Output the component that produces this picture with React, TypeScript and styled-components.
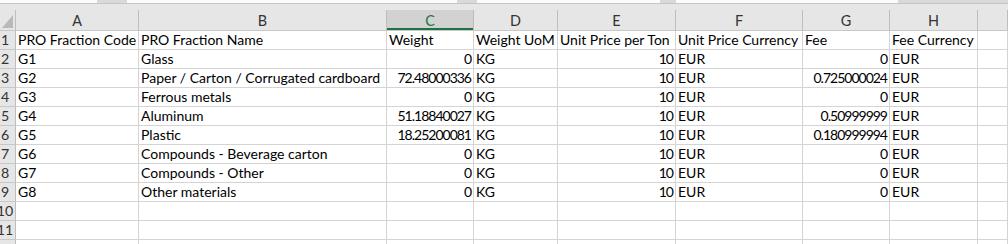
import React from "react";
import styled, { createGlobalStyle } from "styled-components";

const Global = createGlobalStyle`
  html, body { margin: 0; padding: 0; background: #ffffff; }
  body { font-family: Lato, "Liberation Sans", sans-serif; overflow: hidden; }
`;

const COLS = [16, 123, 248, 87, 84, 118, 127, 87, 88];
const template = COLS.map((w) => `${w}px`).join(" ") + " 1fr";

const Page = styled.div`
  width: 1008px;
  height: 244px;
  overflow: hidden;
  background: #ffffff;
`;

const TopStrip = styled.div`
  display: flex;
  height: 3px;
  border-bottom: 1px solid #c6c6c6;
  background: #ffffff;
`;

const StripSeg = styled.div<{ $w: number; $gray?: boolean }>`
  width: ${(p) => p.$w}px;
  flex: none;
  background: ${(p) => (p.$gray ? "#d9d9d9" : "#fbfbfb")};
`;

const HeaderBand = styled.div`
  background: #e6e6e6;
  padding-top: 6px;
`;

const Grid = styled.div`
  display: grid;
  grid-template-columns: ${template};
`;

const HeaderRow = styled(Grid)`
  height: 20px;
  border-bottom: 1px solid #c8c8c8;
  box-sizing: content-box;
`;

const Corner = styled.div`
  border-right: 1px solid #bdbdbd;
  display: flex;
  align-items: flex-end;
  justify-content: flex-end;
  padding: 0 2px 2px 0;
`;

const ColHead = styled.div<{ $sel?: boolean }>`
  display: flex;
  align-items: center;
  justify-content: center;
  border-right: 1px solid #bdbdbd;
  font-size: 14.4px;
  color: ${(p) => (p.$sel ? "#217346" : "#333333")};
  background: ${(p) => (p.$sel ? "#d2d2d2" : "transparent")};
  box-shadow: ${(p) => (p.$sel ? "inset 0 -2px 0 #217346" : "none")};
  padding-top: 1px;
`;

const Row = styled(Grid)`
  height: 19px;
`;

const RowHead = styled.div`
  background: #e6e6e6;
  border-right: 1px solid #bdbdbd;
  border-bottom: 1px solid #c8c8c8;
  overflow: hidden;
  display: flex;
  align-items: flex-end;
`;

const RowNum = styled.span`
  flex: none;
  width: 40px;
  margin-left: -15px;
  text-align: center;
  font-size: 14.2px;
  line-height: 18px;
  color: #333333;
`;

const Cell = styled.div<{ $num?: boolean }>`
  border-right: 1px solid #d4d4d4;
  border-bottom: 1px solid #d4d4d4;
  display: flex;
  align-items: flex-end;
  justify-content: ${(p) => (p.$num ? "flex-end" : "flex-start")};
  padding: 0 ${(p) => (p.$num ? "2px" : "0")} 0 ${(p) => (p.$num ? "0" : "2px")};
  font-size: 14px;
  letter-spacing: ${(p) => (p.$num ? "-1px" : "0")};
  line-height: 18px;
  color: #000000;
  white-space: nowrap;
  overflow: visible;
`;

type Val = string | number;
const header = [
  "PRO Fraction Code",
  "PRO Fraction Name",
  "Weight",
  "Weight UoM",
  "Unit Price per Ton",
  "Unit Price Currency",
  "Fee",
  "Fee Currency",
];

const data: Val[][] = [
  ["G1", "Glass", 0, "KG", 10, "EUR", 0, "EUR"],
  ["G2", "Paper / Carton / Corrugated cardboard", "72.48000336", "KG", 10, "EUR", "0.725000024", "EUR"],
  ["G3", "Ferrous metals", 0, "KG", 10, "EUR", 0, "EUR"],
  ["G4", "Aluminum", "51.18840027", "KG", 10, "EUR", "0.50999999", "EUR"],
  ["G5", "Plastic", "18.25200081", "KG", 10, "EUR", "0.180999994", "EUR"],
  ["G6", "Compounds - Beverage carton", 0, "KG", 10, "EUR", 0, "EUR"],
  ["G7", "Compounds - Other", 0, "KG", 10, "EUR", 0, "EUR"],
  ["G8", "Other materials", 0, "KG", 10, "EUR", 0, "EUR"],
];

const numericCols = new Set([2, 4, 6]);
const letters = ["A", "B", "C", "D", "E", "F", "G", "H", ""];

const CornerTriangle = () => (
  <svg width="11" height="13" viewBox="0 0 11 13">
    <polygon points="0,13 11,13 11,0" fill="#b9b9b9" />
  </svg>
);

export default function App() {
  const rows: (Val[] | null)[] = [header, ...data, null, null, null];
  return (
    <Page>
      <Global />
      <TopStrip>
        <StripSeg $w={97} />
        <StripSeg $w={30} $gray />
        <StripSeg $w={330} />
        <StripSeg $w={20} $gray />
        <StripSeg $w={183} />
        <StripSeg $w={16} $gray />
        <StripSeg $w={222} />
        <StripSeg $w={110} $gray />
      </TopStrip>
      <HeaderBand>
        <HeaderRow>
          <Corner>
            <CornerTriangle />
          </Corner>
          {letters.map((l, i) => (
            <ColHead key={i} $sel={l === "C"}>
              {l}
            </ColHead>
          ))}
        </HeaderRow>
      </HeaderBand>
      {rows.map((r, ri) => (
        <Row key={ri}>
          <RowHead>
            <RowNum>{ri + 1}</RowNum>
          </RowHead>
          {Array.from({ length: 9 }).map((_, ci) => {
            const v = r && ci < 8 ? r[ci] : "";
            const isNum = ri > 0 && numericCols.has(ci);
            return (
              <Cell key={ci} $num={isNum}>
                {v}
              </Cell>
            );
          })}
        </Row>
      ))}
    </Page>
  );
}
